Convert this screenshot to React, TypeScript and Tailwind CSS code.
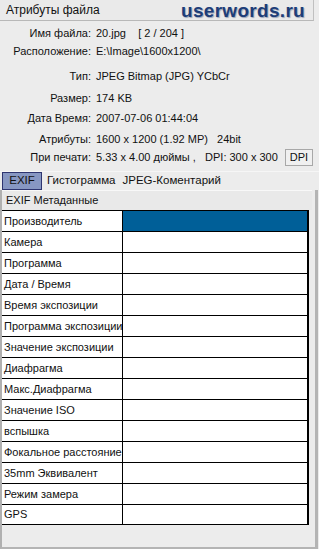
import React from 'react';

const info: { label: string; value: string; cls: string }[] = [
  { label: 'Имя файла:', value: '20.jpg    [ 2 / 204 ]', cls: 'mt-[3px]' },
  { label: 'Расположение:', value: 'E:\\Image\\1600x1200\\', cls: '' },
  { label: 'Тип:', value: 'JPEG Bitmap (JPG) YCbCr', cls: 'mt-[7px]' },
  { label: 'Размер:', value: '174 KB', cls: 'mt-[4px]' },
  { label: 'Дата Время:', value: '2007-07-06 01:44:04', cls: 'mt-[2px]' },
  { label: 'Атрибуты:', value: '1600 x 1200 (1.92 MP)   24bit', cls: 'mt-[3px]' },
];

const exifRows = [
  'Производитель',
  'Камера',
  'Программа',
  'Дата / Время',
  'Время экспозиции',
  'Программа экспозиции',
  'Значение экспозиции',
  'Диафрагма',
  'Макс.Диафрагма',
  'Значение ISO',
  'вспышка',
  'Фокальное расстояние',
  '35mm Эквивалент',
  'Режим замера',
  'GPS',
];

export default function App() {
  return (
    <div
      className="w-[319px] h-[549px] bg-[#ececec] text-[11px] text-[#111] flex flex-col overflow-hidden"
      style={{ fontFamily: '"Liberation Sans", Arial, sans-serif' }}
    >
      {/* title bar */}
      <div className="h-[21px] flex items-center justify-between border-b border-[#b8b8b8] border-r border-r-[#c0c0c0] mr-[5px] bg-[#eaeaea] pl-[6px] pr-[8px]">
        <span className="text-[12px]">Атрибуты файла</span>
        <span
          className="text-[19px] font-bold text-[#1d3d78] leading-none tracking-[0.3px]"
          style={{ textShadow: '1px 1px 1px #9aa4b8' }}
        >
          userwords.ru
        </span>
      </div>

      {/* info rows */}
      <div className="flex flex-col">
        {info.map((r) => (
          <div key={r.label} className={`h-[18px] flex items-center whitespace-pre ${r.cls}`}>
            <span className="w-[91px] text-right">{r.label}</span>
            <span className="ml-[5px]">{r.value}</span>
          </div>
        ))}
        <div className="h-[18px] flex items-center whitespace-pre">
          <span className="w-[91px] text-right">При печати:</span>
          <span className="ml-[5px]">5.33 x 4.00 дюймы ,   DPI: 300 x 300</span>
          <span className="ml-auto mr-[6px] w-[28px] h-[17px] border border-[#a8a8a8] bg-[#f0f0f0] flex items-center justify-center">
            DPI
          </span>
        </div>
      </div>

      {/* tabs */}
      <div className="mt-[5px] h-[19px] flex items-stretch border-t border-[#f6f6f6] pl-[2px] text-[11.5px]">
        <div className="w-[40px] bg-[#8797c2] border border-[#2e3570] flex items-center justify-center">EXIF</div>
        <div className="flex items-center ml-[5px]">Гистограмма</div>
        <div className="flex items-center ml-[7px]">JPEG-Коментарий</div>
      </div>

      {/* panel */}
      <div className="flex-1 flex flex-col border-l-2 border-l-[#b0b0b0] border-r-[3px] border-r-[#b4b4b4] border-b-2 border-b-[#b4b4b4] mr-[1px] bg-[#ececec]">
        <div className="h-[20px] flex items-center pl-[4px] border-t border-[#f8f8f8] bg-[#e9e9e9] mr-[3px]">
          EXIF Метаданные
        </div>
        <div className="w-[307px] border-r-2 border-black bg-white">
          {exifRows.map((name, i) => (
            <div key={name} className="h-[21px] flex border-t border-black last:border-b">
              <div className="w-[121px] border-r border-black flex items-center pl-[2px] whitespace-nowrap overflow-hidden">
                {name}
              </div>
              <div className={`flex-1 ${i === 0 ? 'bg-[#005f98]' : ''}`} />
            </div>
          ))}
        </div>
      </div>
    </div>
  );
}
